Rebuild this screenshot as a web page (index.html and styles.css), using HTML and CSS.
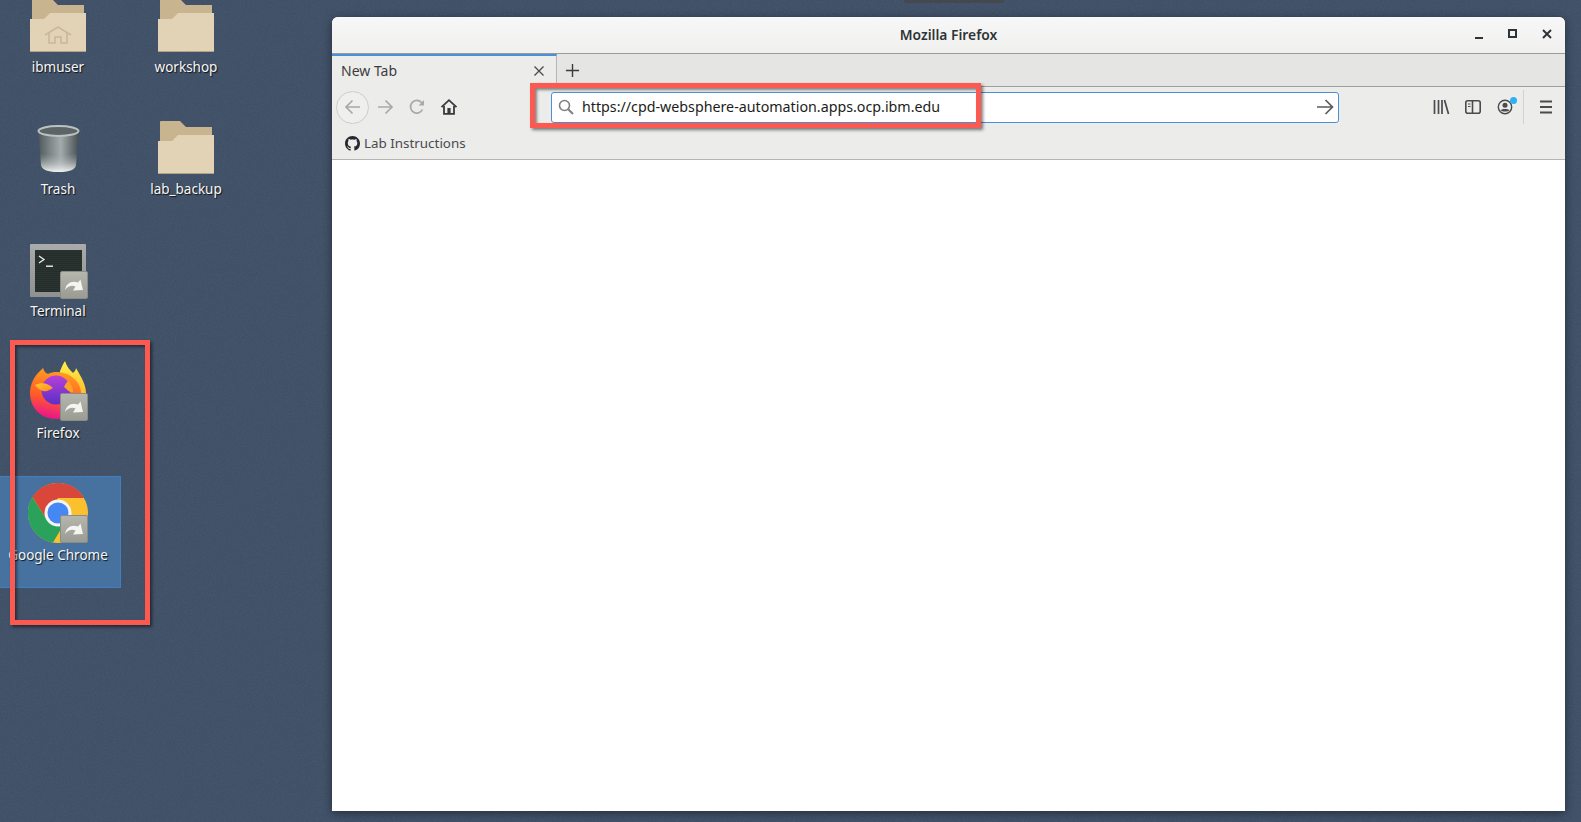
FILE: index.html
```html
<!DOCTYPE html>
<html lang="en">
<head>
  <meta charset="UTF-8">
  <meta name="viewport" content="width=device-width, initial-scale=1.0">
  <title>Desktop</title>
  <link rel="stylesheet" href="styles.css">
</head>
<body>
  <!-- shared icon pieces -->
  <svg class="defs" aria-hidden="true">
    <defs>
      <filter id="grain">
        <feTurbulence type="fractalNoise" baseFrequency="1.1" numOctaves="2"/>
        <feColorMatrix values="0 0 0 0 .8  0 0 0 0 .85  0 0 0 0 .9  0 0 0 .9 -.25"/>
      </filter>
      <linearGradient id="trashBody" x1="0" x2="1" y1="0" y2="0">
        <stop offset="0" stop-color="#4f585a"/>
        <stop offset=".3" stop-color="#7f888a"/>
        <stop offset=".55" stop-color="#a3abad"/>
        <stop offset="1" stop-color="#454d4f"/>
      </linearGradient>
      <linearGradient id="trashFloor" x1="0" x2="0" y1="0" y2="1">
        <stop offset="0" stop-color="#9aa1a1" stop-opacity="0"/>
        <stop offset="1" stop-color="#f0f2f0"/>
      </linearGradient>
      <linearGradient id="termFrame" x1="0" x2="0" y1="0" y2="1">
        <stop offset="0" stop-color="#a9acab"/>
        <stop offset="1" stop-color="#8e918f"/>
      </linearGradient>
      <pattern id="termLines" width="3" height="2" patternUnits="userSpaceOnUse">
        <rect width="3" height="2" fill="#2b3431"/>
        <rect width="3" height="1" fill="#252d2a"/>
      </pattern>
      <linearGradient id="emblem" x1="0" x2="0" y1="0" y2="1">
        <stop offset="0" stop-color="#b5b6ae"/>
        <stop offset="1" stop-color="#9a9b93"/>
      </linearGradient>
      <linearGradient id="foxYellow" x1="0" x2="0" y1="0" y2="1">
        <stop offset="0" stop-color="#fff04a"/>
        <stop offset=".6" stop-color="#ffbe2e"/>
        <stop offset="1" stop-color="#ff8a22"/>
      </linearGradient>
      <linearGradient id="foxBody" x1=".6" x2=".4" y1="0" y2="1">
        <stop offset="0" stop-color="#ffa51f"/>
        <stop offset=".6" stop-color="#ff5a28"/>
        <stop offset=".85" stop-color="#f22c6e"/>
        <stop offset="1" stop-color="#e31587"/>
      </linearGradient>
      <linearGradient id="foxGlobe" x1="0" x2="0" y1="0" y2="1">
        <stop offset="0" stop-color="#b840d8"/>
        <stop offset="1" stop-color="#5a2fc8"/>
      </linearGradient>
      <linearGradient id="foxHead" x1="0" x2="1" y1="0" y2="1">
        <stop offset="0" stop-color="#ffc933"/>
        <stop offset="1" stop-color="#ff8a1f"/>
      </linearGradient>

      <symbol id="folder" viewBox="0 0 64 64">
        <path d="M6 7Q6 6 7 6H26L32 12H58Q58 12 58 13V40H6Z" fill="#c8b48e"/>
        <path d="M4 26H18L24 20H60V58Q60 59 59 59H5Q4 59 4 58Z" fill="#e3d3b6"/>
        <rect x="4" y="58" width="56" height="1" fill="#b3a283"/>
      </symbol>

      <symbol id="shortcut" viewBox="0 0 28 28">
        <rect x=".5" y=".5" width="27" height="27" rx="1.5" fill="url(#emblem)" stroke="#8b8c85"/>
        <path d="M5 19C6 12 12 9 18 11.500L20.500 8.500L23 19L13 19.500L15.500 15.500C12 14 8 15 5 19Z" fill="#f4f4f0"/>
      </symbol>
    </defs>
  </svg>

  <svg class="grain"><rect width="100%" height="100%" filter="url(#grain)"/></svg>

  <div class="top-notch"></div>

  <main class="desktop-icons">
    <div class="desk-item">
      <svg class="desk-icon"><use href="#folder"/>
        <g fill="none" stroke="#c9b998" stroke-width="1.6">
          <path d="M19 42L32 34L45 42"/>
          <path d="M23 40V50H29V44H35V50H41V40"/>
        </g>
      </svg>
      <span class="desk-label">ibmuser</span>
    </div>
    <div class="desk-item">
      <svg class="desk-icon"><use href="#folder"/></svg>
      <span class="desk-label">workshop</span>
    </div>

    <div class="desk-item">
      <svg class="desk-icon" viewBox="0 0 64 64">
        <path d="M12.500 16L15 50Q16 57 32.500 57Q49 57 50 50L53 16Z" fill="url(#trashBody)"/>
        <path d="M14 38Q32 44 51 38L50 50Q49 57 32.500 57Q16 57 15 50Z" fill="url(#trashFloor)"/>
        <ellipse cx="32.500" cy="16" rx="20" ry="5" fill="#5b6466" stroke="#bcc2c2" stroke-width="2"/>
      </svg>
      <span class="desk-label">Trash</span>
    </div>
    <div class="desk-item">
      <svg class="desk-icon"><use href="#folder"/></svg>
      <span class="desk-label">lab_backup</span>
    </div>

    <div class="desk-item">
      <svg class="desk-icon" viewBox="0 0 64 64">
        <rect x="4" y="7" width="56" height="53" rx="1" fill="url(#termFrame)"/>
        <rect x="9" y="13" width="47" height="42" fill="url(#termLines)"/>
        <path d="M13 19L18 22.500L13 26" fill="none" stroke="#f0f0f0" stroke-width="1.300"/>
        <rect x="20" y="28.500" width="7" height="1.400" fill="#f0f0f0"/>
      </svg>
      <svg class="emblem"><use href="#shortcut"/></svg>
      <span class="desk-label">Terminal</span>
    </div>
    <div class="desk-item"></div>

    <div class="desk-item">
      <svg class="desk-icon" viewBox="0 0 64 64">
        <g transform="translate(0 -2)">
          <path d="M39 4C41 10 44 13 47 16C48 15 50 13 50 11C55 20 61 28 60 40L60 58L34 34C30 22 34 12 39 4Z" fill="url(#foxYellow)"/>
          <path d="M17 11C18 14 19 16 22 17C30 13 44 15 52 26C60 40 54 62 30 62C14 62 4 50 4 36C4 28 8 20 12 16Z" fill="url(#foxBody)"/>
          <circle cx="30" cy="33" r="14.500" fill="url(#foxGlobe)"/>
          <path d="M9 28C16 25 22 26 27 31C23 33 21 35 17 34C14 33 11 31 9 28Z" fill="url(#foxHead)"/>
          <path d="M42 24C45 26 47 30 47 35C43 36 41 32 38 30C39 28 40 26 42 24Z" fill="#ffa02a"/>
        </g>
      </svg>
      <svg class="emblem"><use href="#shortcut"/></svg>
      <span class="desk-label">Firefox</span>
    </div>
    <div class="desk-item"></div>

    <div class="desk-item is-selected">
      <svg class="desk-icon" viewBox="0 0 64 64">
        <circle cx="32" cy="32" r="30" fill="#fbc02d"/>
        <path d="M6.500 16A30 30 0 0 0 27 61.600L38 43L21 39Z" fill="#2ba25c"/>
        <path d="M6.500 16A30 30 0 0 1 58 17H32L21 39Z" fill="#d9463a"/>
        <circle cx="32" cy="32" r="13.500" fill="#f4f4f4"/>
        <circle cx="32" cy="32" r="10.500" fill="#4587f3"/>
      </svg>
      <svg class="emblem"><use href="#shortcut"/></svg>
      <span class="desk-label">Google Chrome</span>
    </div>
  </main>

  <section class="window">
    <header class="titlebar">
      <h1 class="win-title">Mozilla Firefox</h1>
      <div class="win-buttons">
        <svg class="win-btn" viewBox="0 0 16 16"><rect x="4" y="11" width="8" height="2" fill="#2e3436"/></svg>
        <svg class="win-btn" viewBox="0 0 16 16"><rect x="4" y="4" width="7" height="7" fill="none" stroke="#2e3436" stroke-width="2"/></svg>
        <svg class="win-btn" viewBox="0 0 16 16"><path d="M4 4L12 12M12 4L4 12" stroke="#2e3436" stroke-width="2"/></svg>
      </div>
    </header>

    <div class="tabstrip">
      <div class="tab">
        <span class="tab-title">New Tab</span>
        <svg class="tab-close" viewBox="0 0 12 12"><path d="M1.500 1.500L10.500 10.500M10.500 1.500L1.500 10.500" stroke="#4a4a4f" stroke-width="1.300"/></svg>
      </div>
      <svg class="tab-new" viewBox="0 0 16 16"><path d="M8 1V15M1 8H15" stroke="#3c3c40" stroke-width="1.500"/></svg>
    </div>

    <nav class="navbar">
      <div class="back-btn">
        <svg class="nav-icon" viewBox="0 0 18 18"><path d="M16 9H2M8.500 2.500L2 9L8.500 15.500" fill="none" stroke="#a9a9ab" stroke-width="1.700"/></svg>
      </div>
      <svg class="nav-icon fwd-icon" viewBox="0 0 18 18"><path d="M2 9H16M9.500 2.500L16 9L9.500 15.500" fill="none" stroke="#a9a9ab" stroke-width="1.700"/></svg>
      <svg class="nav-icon" viewBox="0 0 18 18"><path d="M14.500 11.500A6.300 6.300 0 1 1 13.500 4.500L15.500 6.500" fill="none" stroke="#a9a9ab" stroke-width="1.700"/><path d="M16 2V7.500H10.500Z" fill="#a9a9ab"/></svg>
      <svg class="nav-icon" viewBox="0 0 18 18"><path d="M1.500 9.200L9 2.200L16.500 9.200" fill="none" stroke="#3a3a3e" stroke-width="1.800"/><path d="M4 8V15.800H14V8" fill="none" stroke="#3a3a3e" stroke-width="1.800"/><rect x="7.400" y="10" width="3.200" height="5.500" fill="#3a3a3e"/></svg>

      <div class="urlbar">
        <svg class="url-search" viewBox="0 0 16 16"><circle cx="6.500" cy="6.500" r="5" fill="none" stroke="#808084" stroke-width="1.600"/><path d="M10.200 10.200L15 15" stroke="#808084" stroke-width="2"/></svg>
        <span class="url-text">https://cpd-websphere-automation.apps.ocp.ibm.edu</span>
        <svg class="url-go" viewBox="0 0 18 18"><path d="M1 9H16.500M9.500 2L16.500 9L9.500 16" fill="none" stroke="#5b5b5f" stroke-width="1.700"/></svg>
      </div>

      <div class="nav-right">
        <svg class="nav-icon" viewBox="0 0 18 18"><path d="M2.500 2V16M6.500 2V16M10 2V16M12.500 2L16.500 16" fill="none" stroke="#4a4a4f" stroke-width="1.700"/></svg>
        <svg class="nav-icon" viewBox="0 0 18 18"><rect x="1.800" y="2.800" width="14.400" height="12.400" rx="2" fill="none" stroke="#4a4a4f" stroke-width="1.600"/><path d="M8.500 3V15" stroke="#4a4a4f" stroke-width="1.600"/><path d="M4 6H6.500M4 8.500H6.500" stroke="#4a4a4f" stroke-width="1.200"/></svg>
        <div class="account">
          <svg class="nav-icon" viewBox="0 0 18 18"><circle cx="9" cy="9" r="6.700" fill="none" stroke="#4a4a4f" stroke-width="1.400"/><circle cx="9" cy="7.300" r="2.500" fill="#4a4a4f"/><path d="M4.500 12.300C6 10.500 12 10.500 13.500 12.300C12 14 6 14 4.500 12.300Z" fill="#4a4a4f"/></svg>
          <span class="account-dot"></span>
        </div>
        <span class="nav-sep"></span>
        <svg class="nav-icon" viewBox="0 0 18 18"><path d="M3 3.500H15M3 9H15M3 14.500H15" stroke="#4a4a4f" stroke-width="1.800"/></svg>
      </div>
    </nav>

    <div class="bookmarks">
      <svg class="gh-icon" viewBox="0 0 16 16"><path fill="#24292e" fill-rule="evenodd" d="M8 0C3.580 0 0 3.580 0 8c0 3.540 2.290 6.530 5.470 7.590.4.070.55-.17.55-.38 0-.19-.01-.82-.01-1.490-2.010.37-2.530-.49-2.690-.94-.09-.23-.48-.94-.82-1.130-.28-.15-.68-.52-.01-.53.630-.01 1.080.58 1.230.82.720 1.210 1.870.87 2.330.66.070-.52.280-.87.510-1.070-1.780-.2-3.640-.89-3.640-3.950 0-.87.310-1.590.82-2.150-.08-.2-.36-1.020.08-2.120 0 0 .67-.21 2.200.82.640-.18 1.320-.27 2-.27s1.360.09 2 .27c1.530-1.040 2.200-.82 2.200-.82.440 1.100.16 1.920.08 2.120.51.560.82 1.270.82 2.150 0 3.070-1.870 3.750-3.650 3.950.29.250.54.730.54 1.480 0 1.070-.01 1.930-.01 2.200 0 .21.150.46.550.38A8.010 8.010 0 0 0 16 8c0-4.420-3.580-8-8-8z"/></svg>
      <span class="bm-label">Lab Instructions</span>
    </div>

    <div class="content"></div>
  </section>

  <!-- annotations drawn over the screenshot -->
  <div class="callout callout-url"></div>
  <div class="callout callout-icons"></div>
</body>
</html>
```

FILE: styles.css
```css
* {
  box-sizing: border-box;
}

html, body {
  height: 100%;
  margin: 0;
}

body {
  position: relative;
  overflow: hidden;
  background: #3e4f66;
  font-family: "Noto Sans", sans-serif;
}

.defs {
  position: absolute;
  width: 0;
  height: 0;
}

.grain {
  position: absolute;
  inset: 0;
  width: 100%;
  height: 100%;
  opacity: .1;
}

.top-notch {
  position: absolute;
  top: 0;
  left: 904px;
  width: 100px;
  height: 3px;
  background: #45484c;
  border-radius: 0 0 3px 3px;
}

/* desktop icons */
.desktop-icons {
  position: absolute;
  top: -12px;
  left: -5px;
  display: grid;
  grid-template-columns: 126px 128px;
  grid-auto-rows: 112px;
  column-gap: 1px;
  row-gap: 10px;
}

.desk-item {
  position: relative;
  display: flex;
  flex-direction: column;
  align-items: center;
  padding-top: 4px;
  border: 1px solid transparent;
}

.desk-item.is-selected {
  background: #47729f;
  border-color: #3f7fc4;
}

.desk-icon {
  width: 64px;
  height: 64px;
  flex: none;
  overflow: visible;
}

.emblem {
  position: absolute;
  top: 38px;
  left: 64px;
  width: 28px;
  height: 28px;
}

.desk-label {
  font-size: 13.500px;
  line-height: 20px;
  white-space: nowrap;
  color: #f6f6f6;
  text-shadow: 1px 1px 1px rgba(0, 0, 0, .8);
}

/* firefox window */
.window {
  position: absolute;
  top: 17px;
  left: 332px;
  width: 1233px;
  height: 794px;
  display: flex;
  flex-direction: column;
  background: #fff;
  border-radius: 6px 6px 0 0;
  box-shadow: 0 2px 10px rgba(0, 0, 0, .45);
}

.titlebar {
  position: relative;
  flex: none;
  height: 37px;
  padding-bottom: 2px;
  display: flex;
  align-items: center;
  justify-content: center;
  background: linear-gradient(#f7f7f7, #f0f0ef);
  border-bottom: 1px solid #9b9b99;
  border-radius: 6px 6px 0 0;
}

.win-title {
  margin: 0;
  font-size: 13.800px;
  font-weight: 600;
  color: #2e3436;
}

.win-buttons {
  position: absolute;
  top: 9px;
  right: 10px;
  display: flex;
  gap: 18px;
}

.win-btn {
  width: 16px;
  height: 16px;
}

.tabstrip {
  flex: none;
  height: 33px;
  display: flex;
  align-items: center;
  background: #e5e5e3;
  border-bottom: 1px solid #9f9f9d;
}

.tab {
  align-self: stretch;
  width: 225px;
  margin-bottom: -1px;
  padding: 0 11px 2px 9px;
  display: flex;
  align-items: center;
  justify-content: space-between;
  background: #ececea;
  border-top: 2px solid #4a90d9;
  border-right: 1px solid #b5b5b3;
}

.tab-title {
  font-size: 14px;
  color: #3c3c40;
}

.tab-close {
  width: 12px;
  height: 12px;
}

.tab-new {
  width: 15px;
  height: 15px;
  margin-left: 8px;
}

.navbar {
  flex: none;
  height: 40px;
  padding: 0 10px 0 4px;
  display: flex;
  align-items: center;
  background: #ececea;
}

.nav-icon {
  width: 18px;
  height: 18px;
  flex: none;
}

.navbar > .nav-icon {
  margin-left: 14px;
}

.navbar > .fwd-icon {
  margin-left: 7px;
}

.back-btn {
  width: 33px;
  height: 33px;
  flex: none;
  display: flex;
  align-items: center;
  justify-content: center;
  background: #efefed;
  border: 1px solid #cdcdcb;
  border-radius: 50%;
}

.urlbar {
  flex: none;
  width: 788px;
  height: 31px;
  margin-left: 93px;
  padding: 0 4px 0 6px;
  display: flex;
  align-items: center;
  background: #fff;
  border: 1px solid #4a90d9;
  border-radius: 3px;
}

.url-search {
  width: 16px;
  height: 16px;
  flex: none;
}

.url-text {
  flex: 1;
  margin: 0 0 1px 8px;
  font-size: 14.250px;
  color: #1c1c20;
  white-space: nowrap;
}

.url-go {
  width: 18px;
  height: 18px;
  flex: none;
}

.nav-right {
  margin-left: auto;
  display: flex;
  align-items: center;
  gap: 14px;
}

.account {
  position: relative;
  display: flex;
}

.account-dot {
  position: absolute;
  top: -1px;
  right: -3px;
  width: 7px;
  height: 7px;
  background: #2cb1f5;
  border-radius: 50%;
}

.nav-sep {
  width: 1px;
  height: 34px;
  margin: 0 -1px 0 -5px;
  background: #d2d2d0;
}

.bookmarks {
  flex: none;
  height: 33px;
  padding: 0 13px;
  display: flex;
  align-items: center;
  gap: 4px;
  background: #ececea;
  border-bottom: 1px solid #b4b4b2;
}

.gh-icon {
  width: 15px;
  height: 15px;
}

.bm-label {
  font-size: 13.400px;
  color: #4a4a4f;
}

.content {
  flex: 1;
  background: #fff;
}

/* red annotation boxes */
.callout {
  position: absolute;
  border: 5px solid #fc5a50;
  box-shadow: 2px 2px 3px rgba(0, 0, 0, .5), inset 2px 2px 3px rgba(0, 0, 0, .45);
}

.callout-url {
  top: 83px;
  left: 530px;
  width: 451px;
  height: 45px;
}

.callout-icons {
  top: 340px;
  left: 10px;
  width: 140px;
  height: 285px;
}
```
